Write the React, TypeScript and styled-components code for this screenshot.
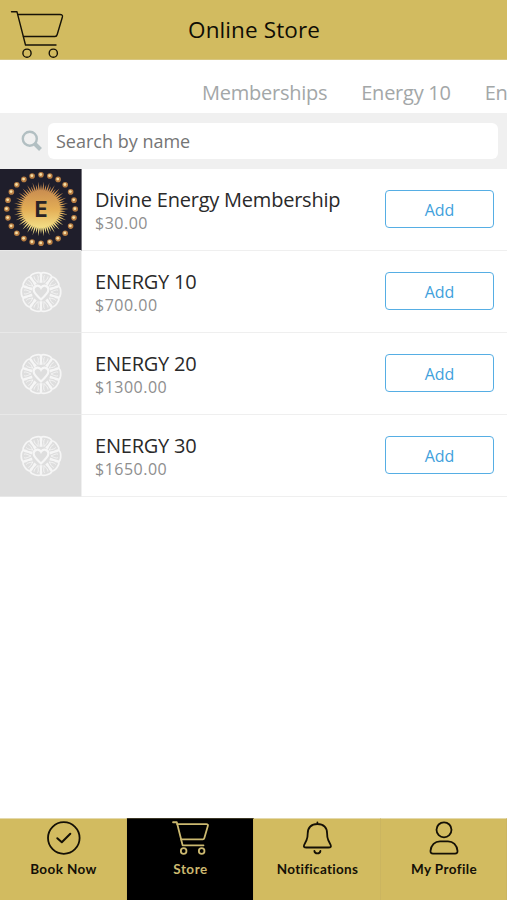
import React from "react";
import styled, { createGlobalStyle } from "styled-components";

const GOLD = "#d2bb60";

const GlobalStyle = createGlobalStyle`
  * { box-sizing: border-box; }
  body { margin: 0; background: #fff; }
  button, input { font: inherit; }
`;

const Screen = styled.div`
  display: flex;
  flex-direction: column;
  width: 507px;
  height: 900px;
  overflow: hidden;
  background: #fff;
  font-family: "Open Sans", "Noto Sans", sans-serif;
`;

const Header = styled.header`
  display: grid;
  grid-template-columns: 74px 1fr 74px;
  align-items: center;
  flex: none;
  height: 60px;
  background: ${GOLD};
  border-bottom: 1px solid #d8c681;
`;

const HeaderCart = styled.div`
  height: 59px;
  padding: 10px 0 0 10px;
  color: #171307;
  svg { display: block; }
`;

const Title = styled.h1`
  margin: 0;
  text-align: center;
  font-size: 22.5px;
  font-weight: 400;
  line-height: 30px;
  letter-spacing: 0.1px;
  padding-left: 1px;
  color: #0f0d05;
`;

const Tabs = styled.nav`
  display: flex;
  flex: none;
  gap: 34px;
  height: 53px;
  padding: 19px 0 0 202px;
  overflow: hidden;
`;

const Tab = styled.span`
  flex: none;
  font-size: 20px;
  line-height: 27px;
  letter-spacing: -0.25px;
  color: #a3a7a8;
  white-space: nowrap;
`;

const SearchBar = styled.div`
  display: flex;
  flex: none;
  height: 56px;
  padding: 10px 9px 10px 20px;
  background: #f0f0f0;
  svg { flex: none; margin: 6px 4px 0 0; }
`;

const SearchInput = styled.input`
  flex: 1;
  min-width: 0;
  height: 36px;
  padding: 0 8px 1px 8px;
  border: 0;
  border-radius: 6px;
  background: #fff;
  font-size: 18px;
  outline: 0;
  &::placeholder { color: #757575; opacity: 1; }
`;

const List = styled.ul`
  flex: 1;
  margin: 0;
  padding: 0;
  list-style: none;
`;

const Row = styled.li`
  display: flex;
  height: 82px;
`;

const Thumb = styled.div<{ $dark?: boolean }>`
  flex: none;
  width: 82px;
  height: 82px;
  background: ${(p) => (p.$dark ? "#1f1e2b" : "#dedede")};
  border-right: 1px solid ${(p) => (p.$dark ? "#77767d" : "#f0f0f0")};
  border-bottom: 1px solid #e8e8e8;
  svg { display: block; }
`;

const RowBody = styled.div`
  display: flex;
  flex: 1;
  justify-content: space-between;
  padding: 17px 13px 0 13px;
  border-bottom: 1px solid #efefef;
`;

const Name = styled.div`
  font-size: 20px;
  line-height: 27px;
  letter-spacing: -0.22px;
  color: #2a2a2a;
  white-space: nowrap;
`;

const Price = styled.div`
  font-size: 16px;
  line-height: 21px;
  letter-spacing: 0.5px;
  color: #8e8e8e;
`;

const AddButton = styled.button`
  width: 109px;
  height: 38px;
  margin-top: 4px;
  padding: 2px 0 0;
  border: 1.5px solid #56aee4;
  border-radius: 4px;
  background: #fff;
  color: #41a1dc;
  font-size: 16px;
  line-height: 22px;
`;

const BottomNav = styled.nav`
  display: grid;
  grid-template-columns: 127px 127px 127px 126px;
  flex: none;
  height: 82px;
  background: ${GOLD};
`;

const NavItem = styled.div<{ $active?: boolean }>`
  display: flex;
  flex-direction: column;
  align-items: center;
  padding-top: 2px;
  border-top: 1px solid ${(p) => (p.$active ? "#3b3626" : "#e4d9ab")};
  border-right: 1px solid #cbb560;
  background: ${(p) => (p.$active ? "#000" : GOLD)};
  color: ${(p) => (p.$active ? "#ccb970" : "#141006")};
  svg { display: block; }
`;

const NavLabel = styled.span<{ $spacing: number }>`
  margin-top: 5px;
  padding-left: 1px;
  font-family: Lato, sans-serif;
  font-size: 13.5px;
  font-weight: 700;
  line-height: 18px;
  letter-spacing: ${(p) => p.$spacing}px;
  white-space: nowrap;
`;

const Cart = ({ width, height, weight }: { width: number; height: number; weight: number }) => (
  <svg width={width} height={height} viewBox="0 0 54 49" preserveAspectRatio="none" fill="none"
    stroke="currentColor" strokeWidth={weight} strokeLinejoin="round" strokeLinecap="round">
    <path d="M1.5 1.8H7L15.5 35H46" />
    <path d="M7.6 4.5H50Q53 4.5 52.4 7L47.2 24.5Q46.7 26.5 45 26.5H13.5" />
    <circle cx="17" cy="43.2" r="4.1" />
    <circle cx="43.3" cy="43.2" r="4.1" />
  </svg>
);

const Search = () => (
  <svg width="24" height="24" viewBox="0 0 24 24" fill="none" stroke="#b2bfc2">
    <circle cx="9.8" cy="9.7" r="7" strokeWidth="2.4" />
    <path d="M15 15L20.5 20.5" strokeWidth="4" />
  </svg>
);

const polar = (r: number, a: number, cx = 41, cy = 40) =>
  `${(cx + r * Math.cos(a)).toFixed(2)} ${(cy + r * Math.sin(a)).toFixed(2)}`;

const rays = Array.from({ length: 120 }, (_, i) =>
  polar(i % 2 ? 18.5 : i % 4 === 0 ? 27.5 : 25, (i * Math.PI) / 60)
).join("L");

const ENERGY_LETTER = "E";

const Letter = styled.text`
  font: 700 21.5px Inter, sans-serif;
`;

const SunLogo = () => (
  <svg width="81" height="81" viewBox="0 0 81 81">
    <defs>
      <linearGradient id="sun" x2="0" y2="1">
        <stop offset="0.15" stopColor="#c98d50" />
        <stop offset="0.5" stopColor="#e3ad55" />
        <stop offset="0.85" stopColor="#f3df87" />
      </linearGradient>
    </defs>
    <path d={`M${rays}Z`} fill="url(#sun)" />
    {Array.from({ length: 24 }, (_, i) => {
      const [x, y] = polar(34.2, (i * Math.PI) / 12).split(" ").map(Number);
      return (
        <g key={i}>
          <circle cx={x} cy={y} r="2.8" fill="#b77c42" />
          <circle cx={x - 0.3} cy={y - 0.3} r="1.4" fill="#f5dfa7" />
        </g>
      );
    })}
    <Letter x="41" y="47.5" textAnchor="middle" fill="#292326">{ENERGY_LETTER}</Letter>
  </svg>
);

const FlowerLogo = () => (
  <svg width="81" height="81" viewBox="0 0 81 81" fill="none" stroke="#f6f6f6">
    {Array.from({ length: 10 }, (_, i) => (
      <g key={i} transform={`rotate(${i * 36 + 18} 41 41)`}>
        <path d="M38.8 32C37.5 28 34.2 26 35.4 23.2C37 20.6 45 20.6 46.6 23.2C47.8 26 44.5 28 43.2 32" strokeWidth="1.7" />
        <path d="M39.2 24C38.4 26 39.8 28 41 31C42.2 28 43.6 26 42.8 24" strokeWidth="0.8" />
      </g>
    ))}
    <path d="M41 48.5C37 45 33.6 42 33.6 38.6C33.6 34.4 39 33.4 41 36.8C43 33.4 48.4 34.4 48.4 38.6C48.4 42 45 45 41 48.5Z"
      strokeWidth="2.2" fill="#dedede" />
  </svg>
);

const stroke = {
  fill: "none", stroke: "currentColor", strokeWidth: 1.8,
  strokeLinecap: "round" as const, strokeLinejoin: "round" as const,
};

const BookIcon = () => (
  <svg width="36" height="34" viewBox="0 0 36 34" {...stroke}>
    <circle cx="18.8" cy="17" r="15.8" />
    <path d="M12.3 17.2L16.8 21.2L25.3 12.7" strokeWidth="2" />
  </svg>
);

const BellIcon = () => (
  <svg width="36" height="34" viewBox="0 0 36 34" {...stroke}>
    <path d="M18.4 1.4V3M7.4 26.5Q3.9 26.5 5.2 23.8L7.6 19Q8.7 16.5 8.7 12.5C8.7 6.5 12.4 3 18.4 3S28.1 6.5 28.1 12.5Q28.1 16.5 29.2 19L31.6 23.8Q32.9 26.5 29.4 26.5Z" />
    <path d="M15.4 30C15.9 33.2 20.9 33.2 21.4 30" />
  </svg>
);

const ProfileIcon = () => (
  <svg width="36" height="34" viewBox="0 0 36 34" {...stroke}>
    <circle cx="18" cy="8.8" r="7.5" />
    <path d="M7 32.6Q4.2 32.6 4.5 29.8C5 24 9 20.3 14 20.3H22C27 20.3 31 24 31.5 29.8Q31.8 32.6 29 32.6Z" />
  </svg>
);

const products = [
  { name: "Divine Energy Membership", price: "$30.00", dark: true },
  { name: "ENERGY 10", price: "$700.00" },
  { name: "ENERGY 20", price: "$1300.00" },
  { name: "ENERGY 30", price: "$1650.00" },
];

const navItems = [
  { label: "Book Now", icon: <BookIcon />, spacing: 0.4 },
  { label: "Store", icon: <Cart width={37} height={34} weight={2.6} />, spacing: 0.5, active: true },
  { label: "Notifications", icon: <BellIcon />, spacing: 0.3 },
  { label: "My Profile", icon: <ProfileIcon />, spacing: 0.4 },
];

export default function App() {
  return (
    <>
      <GlobalStyle />
      <Screen>
        <Header>
          <HeaderCart><Cart width={54} height={49} weight={1.4} /></HeaderCart>
          <Title>Online Store</Title>
        </Header>
        <Tabs>
          <Tab>Memberships</Tab>
          <Tab>Energy 10</Tab>
          <Tab>En</Tab>
        </Tabs>
        <SearchBar>
          <Search />
          <SearchInput placeholder="Search by name" />
        </SearchBar>
        <List>
          {products.map((p) => (
            <Row key={p.name}>
              <Thumb $dark={p.dark}>{p.dark ? <SunLogo /> : <FlowerLogo />}</Thumb>
              <RowBody>
                <div>
                  <Name>{p.name}</Name>
                  <Price>{p.price}</Price>
                </div>
                <AddButton>Add</AddButton>
              </RowBody>
            </Row>
          ))}
        </List>
        <BottomNav>
          {navItems.map((n) => (
            <NavItem key={n.label} $active={n.active}>
              {n.icon}
              <NavLabel $spacing={n.spacing}>{n.label}</NavLabel>
            </NavItem>
          ))}
        </BottomNav>
      </Screen>
    </>
  );
}
